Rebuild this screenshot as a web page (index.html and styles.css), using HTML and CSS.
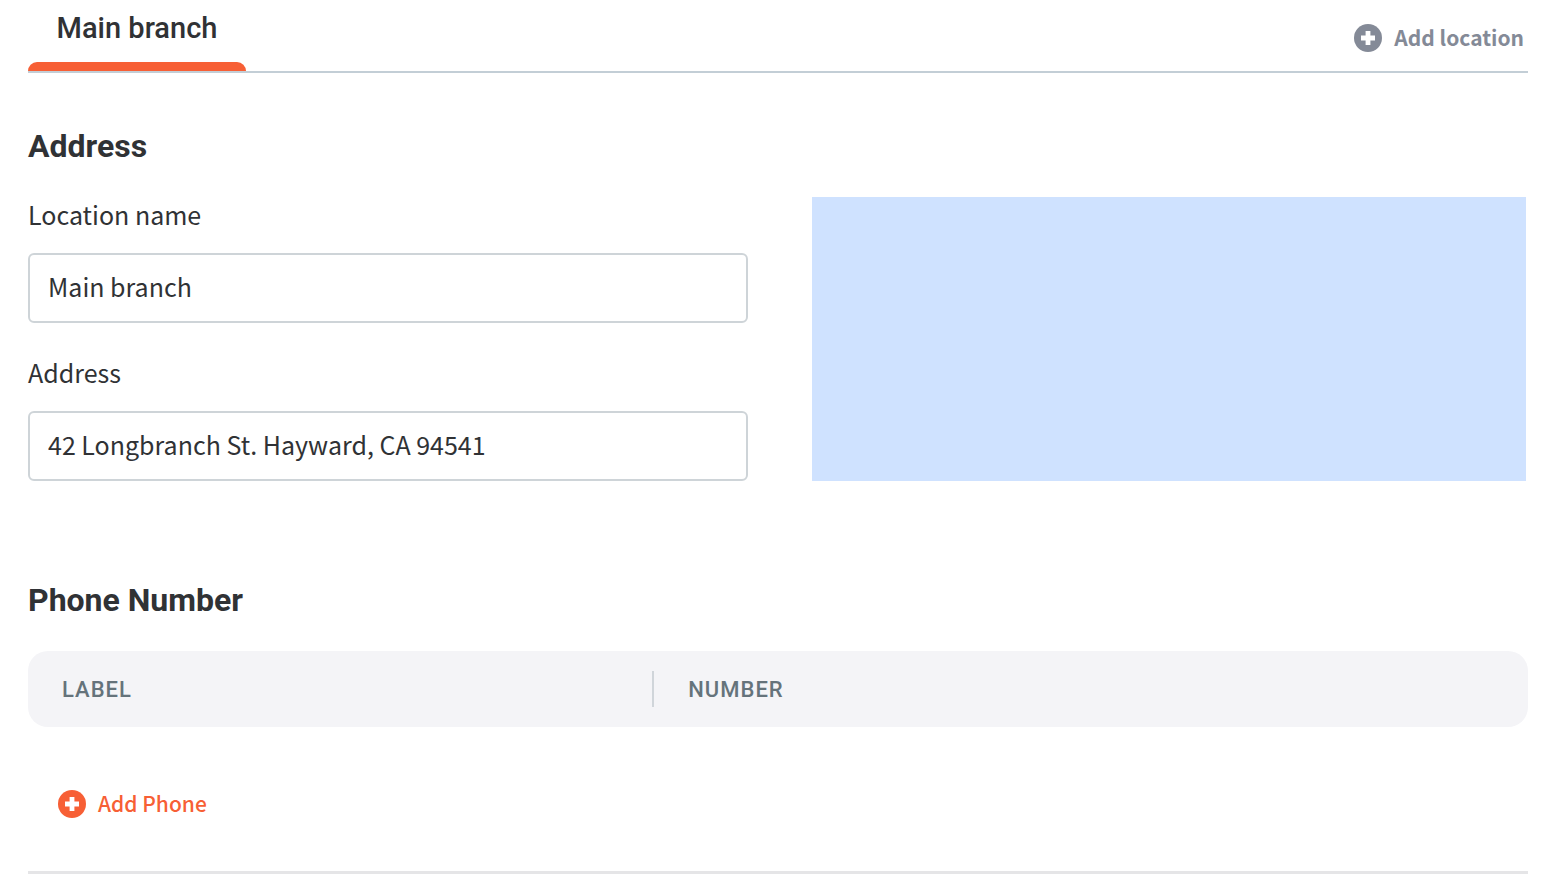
FILE: index.html
```html
<!DOCTYPE html>
<html lang="en">
<head>
<meta charset="utf-8">
<meta name="viewport" content="width=device-width, initial-scale=1">
<title>Locations</title>
<link rel="stylesheet" href="styles.css">
</head>
<body>
<main class="page">
  <header class="tabs">
    <button class="tab" type="button" aria-current="page">Main branch</button>
    <button class="add add-location" type="button">
      <svg class="add-icon" viewBox="0 0 28 28" aria-hidden="true"><circle cx="14" cy="14" r="14" fill="currentColor"/><path d="M11.600 7h4.800v4.600H21v4.800h-4.600V21h-4.800v-4.600H7v-4.800h4.600z" fill="#fff"/></svg>
      <span class="add-text">Add location</span>
    </button>
  </header>

  <section class="address">
    <h2 class="title">Address</h2>
    <div class="columns">
      <form class="fields">
        <div class="field">
          <label class="label" for="name">Location name</label>
          <input class="input" id="name" type="text" value="Main branch">
        </div>
        <div class="field">
          <label class="label" for="address">Address</label>
          <input class="input" id="address" type="text" value="42 Longbranch St. Hayward, CA 94541">
        </div>
      </form>
      <div class="map"></div>
    </div>
  </section>

  <section class="phone">
    <h2 class="title">Phone Number</h2>
    <table class="table">
      <thead>
        <tr>
          <th class="col-label" scope="col"><span class="head head-divided">LABEL</span></th>
          <th scope="col"><span class="head">NUMBER</span></th>
        </tr>
      </thead>
    </table>
    <button class="add add-phone" type="button">
      <svg class="add-icon" viewBox="0 0 28 28" aria-hidden="true"><circle cx="14" cy="14" r="14" fill="currentColor"/><path d="M11.600 7h4.800v4.600H21v4.800h-4.600V21h-4.800v-4.600H7v-4.800h4.600z" fill="#fff"/></svg>
      <span class="add-text">Add Phone</span>
    </button>
  </section>
</main>
</body>
</html>
```
FILE: styles.css
```css
* {
  box-sizing: border-box;
}

body {
  margin: 0;
  background: #fff;
  color: #303235;
  font-family: "Noto Sans CJK SC", "Noto Sans", sans-serif;
  font-size: 25px;
}

button,
input {
  font: inherit;
  color: inherit;
}

button {
  padding: 0;
  border: 0;
  background: none;
  cursor: pointer;
}

.page {
  padding: 0 38px 0 28px;
}

.tabs {
  display: flex;
  justify-content: space-between;
  align-items: flex-end;
  border-bottom: 2px solid #c3ced6;
}

.tab {
  min-width: 218px;
  padding: 8px 0 0;
  font-family: Roboto, sans-serif;
  font-size: 29px;
  font-weight: 500;
  line-height: 40px;
}

.tab::after {
  content: "";
  display: block;
  height: 9px;
  margin-top: 14px;
  border-radius: 10px 10px 0 0;
  background: #f75f35;
}

.add {
  display: flex;
  align-items: center;
  gap: 12px;
  font-size: 21px;
  line-height: 30px;
}

.add-icon {
  width: 28px;
  height: 28px;
}

.add-text {
  padding-bottom: 2px;
}

.add-location {
  margin: 0 4px 17px 0;
  color: #848a97;
  font-weight: 700;
}

.title {
  margin: 0;
  font-family: Roboto, sans-serif;
  font-size: 32px;
  font-weight: 700;
  line-height: 40px;
}

.address {
  padding-top: 53px;
}

.columns {
  display: grid;
  grid-template-columns: 720fr 714fr;
  gap: 64px;
  margin-top: 31px;
  padding-right: 2px;
}

.fields {
  display: grid;
  gap: 32px;
}

.label {
  display: block;
  margin-bottom: 22px;
  line-height: 34px;
}

.input {
  display: block;
  width: 100%;
  height: 70px;
  padding: 0 18px 4px;
  border: 2px solid #ced4d8;
  border-radius: 6px;
  background: #fff;
}

.map {
  background: #cfe2ff;
}

.phone {
  padding: 99px 0 51px;
  border-bottom: 3px solid #e5e5e7;
}

.table {
  width: 100%;
  margin-top: 31px;
  border-collapse: collapse;
  table-layout: fixed;
  border-radius: 20px;
  background: #f4f4f7;
}

.table th {
  padding: 20px 0;
  text-align: left;
}

.col-label {
  width: 41.75%;
}

.head {
  display: block;
  padding: 2px 0 0 34px;
  color: #65737b;
  font-family: Roboto, sans-serif;
  font-size: 22px;
  font-weight: 500;
  line-height: 34px;
  letter-spacing: 1px;
}

.head-divided {
  border-right: 2px solid #d0d5da;
}

.add-phone {
  margin: 61px 0 0 30px;
  color: #f75f35;
  font-weight: 500;
}
```
